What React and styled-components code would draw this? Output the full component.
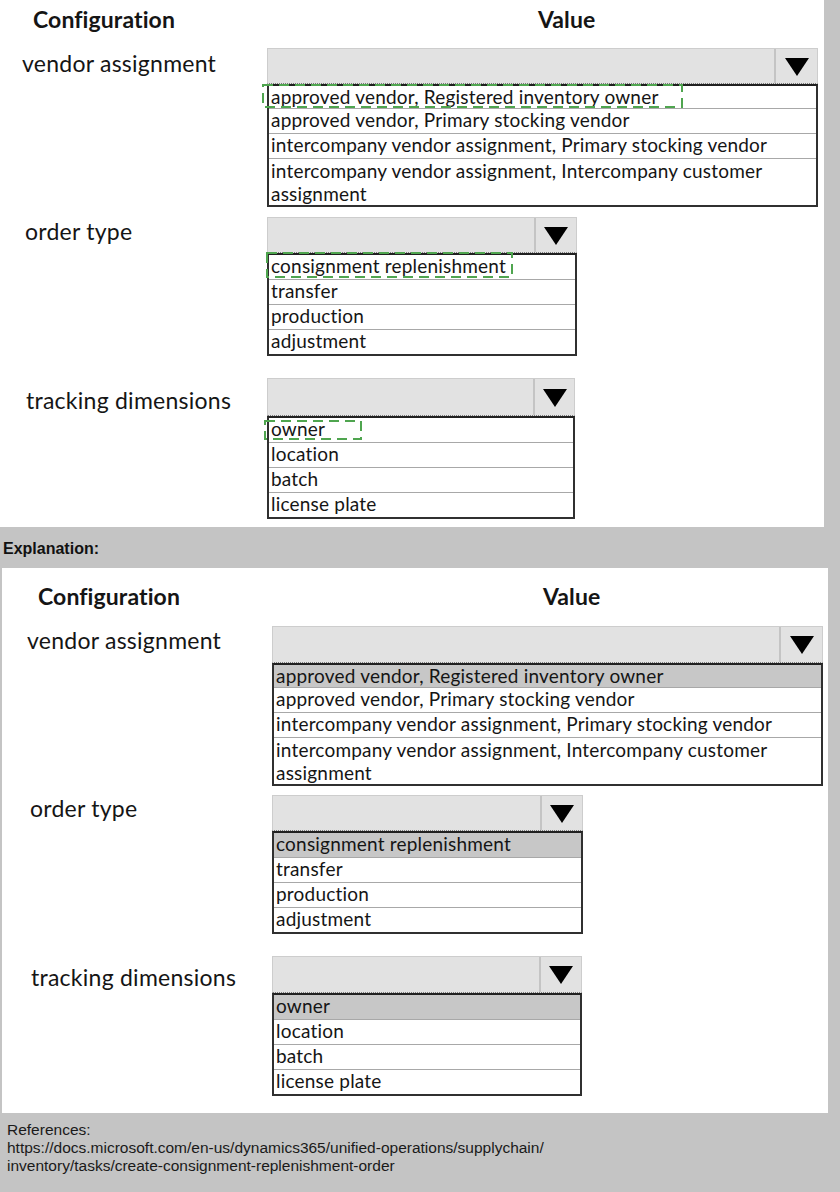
import React from 'react';
import styled, { createGlobalStyle } from 'styled-components';

const GlobalStyle = createGlobalStyle`
  html, body { margin: 0; padding: 0; background: #c4c4c4; }
  * { box-sizing: border-box; }
`;

const Page = styled.div`
  width: 840px;
  height: 1192px;
  overflow: hidden;
  background: #c4c4c4;
`;

const Panel = styled.section`
  background: #ffffff;
  width: ${p => p.$w}px;
  margin-left: ${p => p.$x}px;
  padding: ${p => p.$pt}px 0 ${p => p.$pb}px ${p => p.$pl}px;
  font-family: Lato, "Open Sans", sans-serif;
  color: #151515;
`;

const TitleRow = styled.div`
  display: grid;
  grid-template-columns: 267px 1fr;
  height: 34px;
  line-height: 34px;
  font-size: 23px;
  font-weight: 700;
  letter-spacing: 0.1px;
  margin-bottom: ${p => p.$mb}px;
`;

const TitleCell = styled.div`
  padding-left: ${p => p.$x}px;
  white-space: nowrap;
`;

const ConfigRow = styled.div`
  display: grid;
  grid-template-columns: 267px auto;
  align-items: start;
  margin-top: ${p => p.$mt}px;
`;

const Label = styled.div`
  padding-left: ${p => p.$x}px;
  margin-top: ${p => p.$y}px;
  font-size: 23px;
  letter-spacing: 0.25px;
  line-height: 30px;
  white-space: nowrap;
`;

const Dropdown = styled.div`
  width: ${p => p.$w}px;
`;

const DropHeader = styled.div`
  display: flex;
  height: ${p => p.$h}px;
  background: #e2e2e2;
  border: 1px solid #cdcdcd;
  border-bottom: 1px dotted #7a7a7a;
`;

const HeaderField = styled.div`
  flex: 1;
`;

const HeaderButton = styled.div`
  width: ${p => p.$bw}px;
  border-left: 2px solid #c4c4c4;
  display: flex;
  align-items: center;
  justify-content: center;
`;

const Triangle = styled.span`
  width: 0;
  height: 0;
  border-left: 12px solid transparent;
  border-right: 12px solid transparent;
  border-top: 18px solid #000;
  margin-top: 1px;
`;

const ListBox = styled.div`
  border: 2px solid #303030;
  border-top-color: #202020;
`;

const Option = styled.div`
  position: relative;
  font-size: 19px;
  letter-spacing: 0.2px;
  line-height: ${p => p.$lh}px;
  padding: 0 0 ${p => p.$pb}px 2px;
  background: ${p => (p.$sel ? '#c7c7c7' : '#ffffff')};
  white-space: nowrap;
  & + & {
    border-top: 1px solid #a8a8a8;
  }
`;

const Mark = styled.svg`
  position: absolute;
  left: ${p => p.$l}px;
  top: ${p => p.$t}px;
  overflow: visible;
  pointer-events: none;
`;

const Strip = styled.div`
  height: 41px;
  line-height: 41px;
  padding: 1px 0 0 3px;
  font-family: "Liberation Sans", Arial, sans-serif;
  font-weight: 700;
  font-size: 16px;
  color: #111;
`;

const Refs = styled.div`
  padding: 8px 0 0 7px;
  font-family: "Liberation Sans", Arial, sans-serif;
  font-size: 15.5px;
  line-height: 18px;
  color: #1a1a1a;
`;

const VENDOR = [
  'approved vendor, Registered inventory owner',
  'approved vendor, Primary stocking vendor',
  'intercompany vendor assignment, Primary stocking vendor',
  ['intercompany vendor assignment, Intercompany customer', 'assignment'],
];
const ORDER = ['consignment replenishment', 'transfer', 'production', 'adjustment'];
const TRACK = ['owner', 'location', 'batch', 'license plate'];

const panels = [
  {
    key: 'q',
    x: 0, w: 824, pl: 0, pt: 2, pb: 8, mb: 12, showMarks: true, showSel: false,
    rows: [
      { label: 'vendor assignment', lx: 22, ly: 0, mt: 0, w: 551, h: 36, bw: 43, firstPb: 1, options: VENDOR, mark: { l: -7, t: -2, w: 421, h: 24 } },
      { label: 'order type', lx: 25, ly: -1, mt: 10, w: 310, h: 36, bw: 42, firstPb: 3, options: ORDER, mark: { l: -3, t: -3, w: 247, h: 26 } },
      { label: 'tracking dimensions', lx: 26, ly: 7, mt: 22, w: 308, h: 38, bw: 41, firstPb: 3, options: TRACK, mark: { l: -5, t: 2, w: 98, h: 20 } },
    ],
  },
  {
    key: 'a',
    x: 2, w: 826, pl: 3, pt: 11, pb: 17, mb: 13, showMarks: false, showSel: true,
    rows: [
      { label: 'vendor assignment', lx: 22, ly: -1, mt: 0, w: 551, h: 37, bw: 43, firstPb: 1, options: VENDOR },
      { label: 'order type', lx: 25, ly: -2, mt: 9, w: 311, h: 36, bw: 42, firstPb: 3, options: ORDER },
      { label: 'tracking dimensions', lx: 26, ly: 6, mt: 22, w: 310, h: 37, bw: 42, firstPb: 3, options: TRACK },
    ],
  },
];

function DashedMark({ m }) {
  return (
    <Mark $l={m.l} $t={m.t} width={m.w} height={m.h}>
      <rect
        x="1"
        y="1"
        width={m.w - 2}
        height={m.h - 2}
        fill="none"
        stroke="#4fa54f"
        strokeWidth="2"
        strokeDasharray="10 6"
      />
    </Mark>
  );
}

function Select({ row, panel }) {
  return (
    <Dropdown $w={row.w}>
      <DropHeader $h={row.h}>
        <HeaderField />
        <HeaderButton $bw={row.bw}>
          <Triangle />
        </HeaderButton>
      </DropHeader>
      <ListBox>
        {row.options.map((opt, i) => {
          const wrapped = Array.isArray(opt);
          return (
            <Option
              key={i}
              $sel={panel.showSel && i === 0}
              $lh={wrapped ? 23 : 21}
              $pb={wrapped ? 0 : i === 0 ? row.firstPb : 3}
            >
              {wrapped ? (
                <>
                  {opt[0]}
                  <br />
                  {opt[1]}
                </>
              ) : (
                opt
              )}
              {panel.showMarks && i === 0 && row.mark ? <DashedMark m={row.mark} /> : null}
            </Option>
          );
        })}
      </ListBox>
    </Dropdown>
  );
}

function ConfigPanel({ panel }) {
  return (
    <Panel $x={panel.x} $w={panel.w} $pl={panel.pl} $pt={panel.pt} $pb={panel.pb}>
      <TitleRow $mb={panel.mb}>
        <TitleCell $x={33}>Configuration</TitleCell>
        <TitleCell $x={271}>Value</TitleCell>
      </TitleRow>
      {panel.rows.map(row => (
        <ConfigRow key={row.label} $mt={row.mt}>
          <Label $x={row.lx} $y={row.ly}>{row.label}</Label>
          <Select row={row} panel={panel} />
        </ConfigRow>
      ))}
    </Panel>
  );
}

export default function App() {
  return (
    <Page>
      <GlobalStyle />
      <ConfigPanel panel={panels[0]} />
      <Strip>Explanation:</Strip>
      <ConfigPanel panel={panels[1]} />
      <Refs>
        References:
        <br />
        https://docs.microsoft.com/en-us/dynamics365/unified-operations/supplychain/
        <br />
        inventory/tasks/create-consignment-replenishment-order
      </Refs>
    </Page>
  );
}
